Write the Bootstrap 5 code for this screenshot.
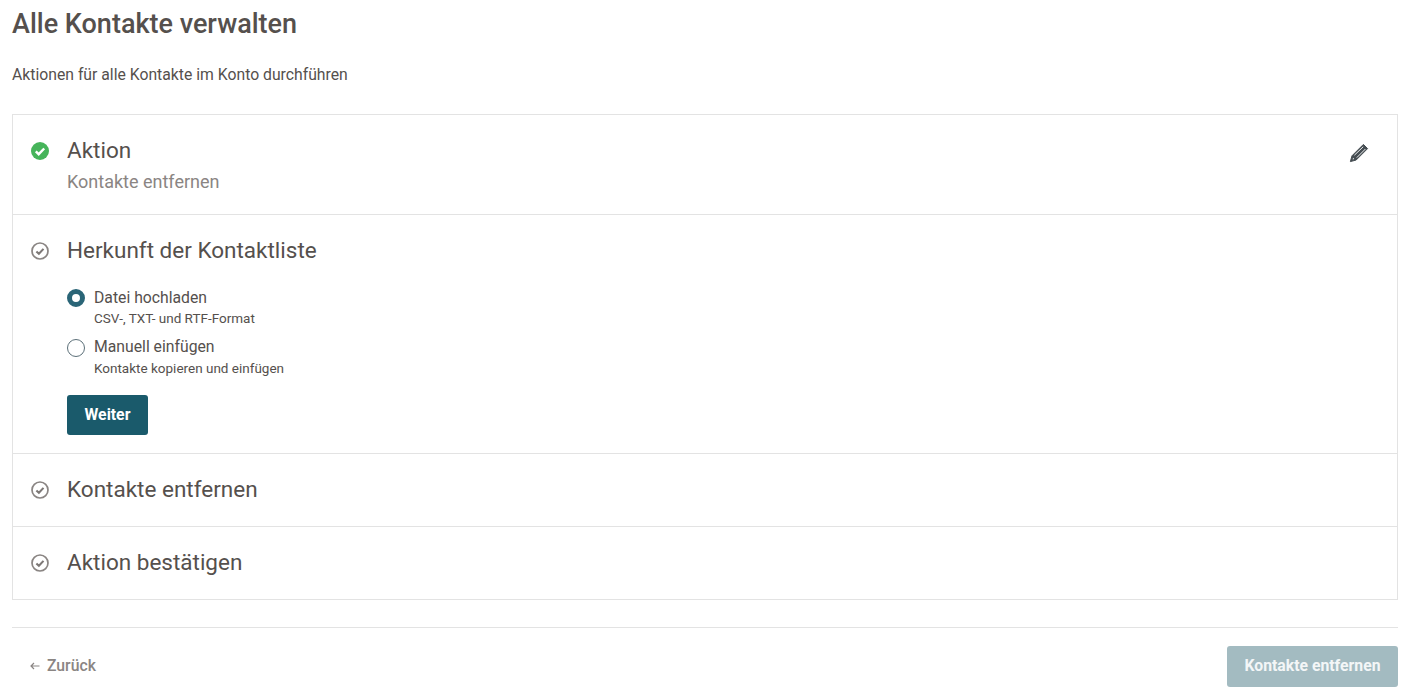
<!DOCTYPE html>
<html lang="de">
<head>
    <meta charset="UTF-8">
    <meta name="viewport" content="width=device-width, initial-scale=1.0">
    <title>Alle Kontakte verwalten</title>
    <link href="https://cdn.jsdelivr.net/npm/bootstrap@5.3.0/dist/css/bootstrap.min.css" rel="stylesheet">
    <style>
        body {
            font-family: Roboto, "Liberation Sans", sans-serif;
            color: #55504d;
            background: #fff;
            overflow: hidden;
        }
        .page-wrap {
            padding: 0 10px 0 12px;
        }
        .page-title {
            font-size: 27px;
            font-weight: 500;
            line-height: 30px;
            margin: 9px 0 0;
            color: #55504d;
        }
        .page-sub {
            font-size: 15.75px;
            line-height: 20px;
            margin: 26px 0 29px;
        }
        .step-box {
            border: 1px solid #e3e3e3;
        }
        .step-row {
            padding: 20px 18px 18px;
            gap: 18px;
        }
        .step-row + .step-row {
            border-top: 1px solid #e3e3e3;
        }
        .step-first {
            height: 99px;
        }
        .step-icon {
            width: 18px;
            height: 18px;
            flex: none;
            margin-top: 7px;
        }
        .step-title {
            font-size: 22.5px;
            line-height: 31px;
            margin: 0;
            font-weight: 400;
        }
        .step-value {
            font-size: 18px;
            line-height: 20px;
            margin-top: 6px;
            color: #8a8583;
        }
        .edit-icon {
            width: 20px;
            height: 20px;
            margin: 8px 10px 0 0;
        }
        .radio-list {
            margin-top: 22px;
        }
        .radio-row {
            gap: 9px;
            margin-bottom: 9px;
        }
        .radio-dot {
            width: 18px;
            height: 18px;
            margin-top: 1px;
            flex: none;
            border-radius: 50%;
            border: 1px solid #5b6f78;
            background: #fff;
        }
        .radio-dot.is-on {
            border: 5px solid #2a6577;
        }
        .radio-row + .radio-row .radio-dot {
            margin-top: 2px;
        }
        .radio-name {
            font-size: 15.75px;
            line-height: 20px;
        }
        .radio-hint {
            font-size: 13.5px;
            line-height: 20px;
        }
        .radio-row + .radio-row .radio-hint {
            margin-top: 1px;
        }
        .btn-next {
            background: #1a5a6b;
            border: 0;
            color: #fff;
            font-size: 15.75px;
            font-weight: 700;
            width: 81px;
            height: 40px;
            border-radius: 3px;
            margin-top: 8px;
            margin-bottom: 0;
        }
        .btn-next:hover {
            background: #1a5a6b;
            color: #fff;
        }
        .step-short {
            height: 73px;
        }
        .foot-line {
            border-top: 1px solid #e3e3e3;
            margin-top: 27px;
            padding-top: 18px;
        }
        .back-link {
            font-size: 15.75px;
            font-weight: 500;
            color: #8a8583;
            text-decoration: none;
            margin-left: 18px;
            padding-bottom: 2px;
            gap: 7px;
        }
        .btn-remove {
            background: #a3bbc1;
            border: 0;
            color: #fff;
            font-size: 15.75px;
            font-weight: 700;
            width: 171px;
            height: 41px;
            border-radius: 3px;
            padding-bottom: 2px !important;
        }
        .btn-remove:disabled {
            background: #a3bbc1;
            color: #f3f6f7;
            opacity: 1;
        }
    </style>
</head>
<body>
    <div class="page-wrap">
        <h1 class="page-title">Alle Kontakte verwalten</h1>
        <p class="page-sub">Aktionen für alle Kontakte im Konto durchführen</p>

        <div class="step-box">
            <div class="step-row step-first d-flex">
                <svg class="step-icon" viewBox="0 0 18 18">
                    <circle cx="9" cy="9" r="9" fill="#46b45a"/>
                    <path d="M4.8 9.4l2.9 2.8 5.5-5.7" fill="none" stroke="#fff" stroke-width="2.4"/>
                </svg>
                <div class="flex-grow-1">
                    <h2 class="step-title">Aktion</h2>
                    <div class="step-value">Kontakte entfernen</div>
                </div>
                <svg class="edit-icon" viewBox="0 0 20 20">
                    <path d="M14.4 1.4l4.2 4.2L7.2 17l-5.8 1.6L3 12.8z" fill="#454d52" stroke="#454d52" stroke-width="1" stroke-linejoin="round"/>
                    <path d="M5.4 12.2l8.8-8.4M7.8 14.6l8.6-8.6" fill="none" stroke="#fff" stroke-width=".9"/>
                    <path d="M3.6 16.4l.5-1.6 1.1 1.1z" fill="#fff"/>
                </svg>
            </div>

            <div class="step-row d-flex">
                <svg class="step-icon" viewBox="0 0 18 18">
                    <circle cx="9" cy="9" r="8" fill="none" stroke="#8a8583" stroke-width="1.7"/>
                    <path d="M5.4 9.4l2.5 2.4 4.6-4.9" fill="none" stroke="#7d7876" stroke-width="2.1"/>
                </svg>
                <div class="flex-grow-1">
                    <h2 class="step-title">Herkunft der Kontaktliste</h2>
                    <div class="radio-list">
                        <div class="radio-row d-flex">
                            <span class="radio-dot is-on"></span>
                            <div>
                                <div class="radio-name">Datei hochladen</div>
                                <div class="radio-hint">CSV-, TXT- und RTF-Format</div>
                            </div>
                        </div>
                        <div class="radio-row d-flex">
                            <span class="radio-dot"></span>
                            <div>
                                <div class="radio-name">Manuell einfügen</div>
                                <div class="radio-hint">Kontakte kopieren und einfügen</div>
                            </div>
                        </div>
                    </div>
                    <button type="button" class="btn btn-next p-0">Weiter</button>
                </div>
            </div>

            <div class="step-row step-short d-flex">
                <svg class="step-icon" viewBox="0 0 18 18">
                    <circle cx="9" cy="9" r="8" fill="none" stroke="#8a8583" stroke-width="1.7"/>
                    <path d="M5.4 9.4l2.5 2.4 4.6-4.9" fill="none" stroke="#7d7876" stroke-width="2.1"/>
                </svg>
                <h2 class="step-title">Kontakte entfernen</h2>
            </div>

            <div class="step-row step-short d-flex">
                <svg class="step-icon" viewBox="0 0 18 18">
                    <circle cx="9" cy="9" r="8" fill="none" stroke="#8a8583" stroke-width="1.7"/>
                    <path d="M5.4 9.4l2.5 2.4 4.6-4.9" fill="none" stroke="#7d7876" stroke-width="2.1"/>
                </svg>
                <h2 class="step-title">Aktion bestätigen</h2>
            </div>
        </div>

        <div class="foot-line d-flex justify-content-between align-items-center">
            <a href="#" class="back-link d-inline-flex align-items-center">
                <svg width="10" height="8" viewBox="0 0 10 8">
                    <path d="M9.5 4H1.5M4 1L1 4l3 3" fill="none" stroke="#8a8583" stroke-width="1.2"/>
                </svg>
                Zurück
            </a>
            <button type="button" class="btn btn-remove p-0" disabled>Kontakte entfernen</button>
        </div>
    </div>
</body>
</html>
